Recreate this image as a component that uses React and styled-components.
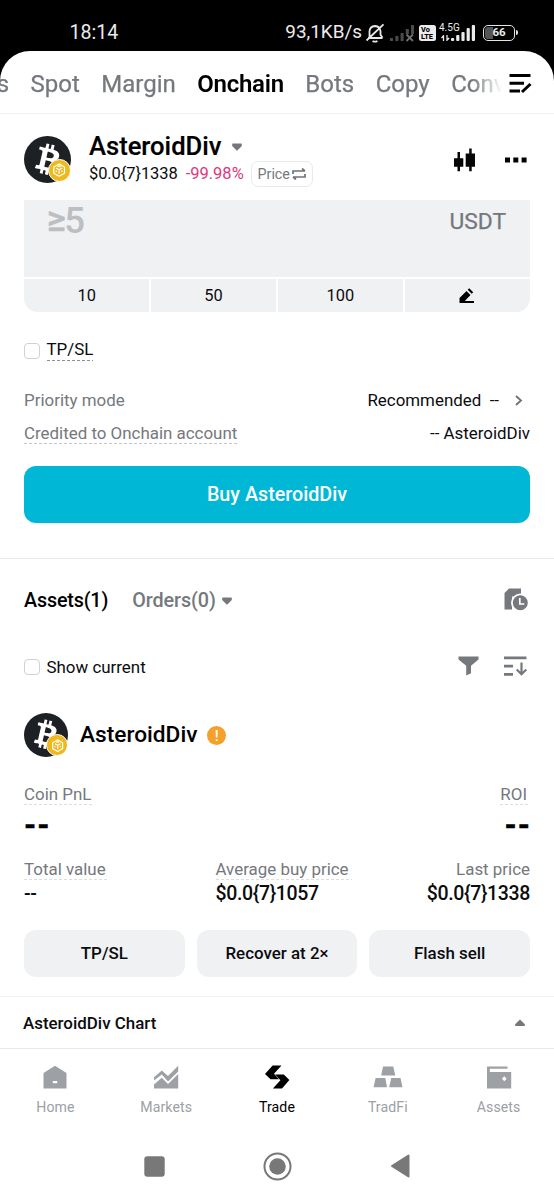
import React from "react";
import styled, { createGlobalStyle } from "styled-components";
import { FaBtc } from "react-icons/fa";

const Global = createGlobalStyle`
  * { box-sizing: border-box; }
  body { margin: 0; background: #fff; }
  button { font: inherit; border: 0; padding: 0; margin: 0; color: inherit; background: none; }
  svg { display: block; flex: none; }
`;

const GREY = "#75787d";
const INK = "#0b0c0e";

const Screen = styled.div`
  width: 554px;
  height: 1200px;
  overflow: hidden;
  display: flex;
  flex-direction: column;
  background: #000;
  color: ${INK};
  font-family: Roboto, "Liberation Sans", sans-serif;
  font-size: 16.92px;
  line-height: 1;
  white-space: nowrap;
`;

/* ---------- status bar ---------- */
const StatusBar = styled.header`
  height: 51px;
  flex: none;
  display: flex;
  align-items: center;
  padding: 14px 36px 0 69.5px;
  color: #ececec;
  font-size: 18.9px;
`;
const Clock = styled.span`
  flex: 1;
  font-size: 19.6px;
`;
const StatusIcons = styled.div`
  display: flex;
  align-items: center;
`;
const BellOff = styled.svg`
  margin-left: 3px;
`;
const NoSignal = styled.svg`
  margin-left: 5px;
`;
const VoLte = styled.div`
  width: 17px;
  height: 16px;
  margin: 0 3px 0 4px;
  border-radius: 2.5px;
  background: #ececec;
  color: #000;
  font-size: 7.4px;
  font-weight: 800;
  line-height: 7px;
  padding: 1px 0 0 2px;
`;
const Network = styled.div`
  display: flex;
  align-items: flex-end;
  height: 19px;
`;
const NetworkLabel = styled.div`
  display: flex;
  flex-direction: column;
  justify-content: space-between;
  height: 18px;
  width: 12px;
  margin-bottom: 1px;
  font-size: 10px;
  line-height: 9px;
  svg { margin-left: 2px; }
`;
const Battery = styled.div`
  width: 32px;
  height: 16px;
  margin-left: 7px;
  border: 1.6px solid #e4e4e4;
  border-radius: 5px;
  font-size: 11.5px;
  font-weight: 700;
  display: flex;
  align-items: center;
  justify-content: center;
  background: linear-gradient(90deg, #555 0 9px, #000 9px);
  background-clip: content-box;
  padding: 1px;
`;
const BatteryNub = styled.div`
  width: 2px;
  height: 5px;
  margin-left: 1px;
  background: #e4e4e4;
  border-radius: 0 2px 2px 0;
`;

/* ---------- sheet and tabs ---------- */
const Sheet = styled.div`
  flex: 1;
  display: flex;
  flex-direction: column;
  background: #fff;
  border-radius: 30px 30px 0 0;
`;
const TabBar = styled.nav`
  height: 63px;
  display: flex;
  align-items: center;
  padding: 3px 22px 0 0;
  border-bottom: 1px solid #efeff1;
  font-size: 24px;
`;
const TabList = styled.div`
  flex: 1;
  min-width: 0;
  display: flex;
  gap: 21.5px;
  margin-left: -3.3px;
  overflow: hidden;
  line-height: 32px;
  mask-image: linear-gradient(90deg, #000 475px, transparent 505px);
`;
const Tab = styled.span`
  flex: none;
  color: ${(p) => (p.$active ? "#000" : GREY)};
  font-weight: ${(p) => (p.$active ? 600 : 400)};
  letter-spacing: ${(p) => (p.$active ? "-0.28px" : "0")};
  -webkit-text-stroke: ${(p) => (p.$active ? "0" : "0.25px")};
`;

/* ---------- token header ---------- */
const TokenHeader = styled.section`
  height: 86px;
  display: flex;
  align-items: center;
  padding: 5px 27px 0 24px;
`;
const Logo = styled.div`
  position: relative;
  flex: none;
  width: ${(p) => p.$size}px;
  height: ${(p) => p.$size}px;
  border-radius: 50%;
  background: #1d2025;
  color: #fff;
  display: flex;
  align-items: center;
  justify-content: center;
  > svg { transform: translateX(1px) rotate(13deg); }
`;
const LogoBadge = styled.div`
  position: absolute;
  right: 0;
  bottom: 1px;
  width: 49%;
  height: 49%;
  border-radius: 50%;
  background: #efb81c;
  border: 1.3px solid #fff;
  display: flex;
  align-items: center;
  justify-content: center;
`;
const TokenInfo = styled.div`
  flex: 1;
  margin-left: 18px;
`;
const TokenName = styled.h1`
  margin: 0;
  height: 29px;
  display: flex;
  align-items: center;
  gap: 10px;
  font-size: 25.6px;
  font-weight: 500;
  color: #000;
  -webkit-text-stroke: 0.2px;
`;
const PriceLine = styled.div`
  display: flex;
  align-items: center;
  height: 26px;
  font-size: 16.5px;
`;
const Price = styled.span`
  letter-spacing: -0.1px;
`;
const Change = styled.span`
  margin-left: 8px;
  color: #e0377c;
`;
const PriceChip = styled.button`
  height: 26px;
  width: 62px;
  margin-left: 7px;
  border: 1.5px solid #e9e9eb;
  border-radius: 7px;
  display: flex;
  align-items: center;
  justify-content: center;
  gap: 2px;
  font-size: 14.3px;
  color: ${GREY};
`;
const HeaderIcons = styled.div`
  display: flex;
  align-items: center;
  gap: 30.5px;
`;

/* ---------- order form ---------- */
const Form = styled.section`
  padding: 0 24px;
  height: 359px;
  border-bottom: 1px solid #e8e9eb;
`;
const AmountBox = styled.div`
  height: 77px;
  display: flex;
  justify-content: space-between;
  padding: 0 24px 0 23px;
  background: #f0f1f3;
`;
const AmountHint = styled.div`
  display: flex;
  color: #bcbec1;
  font-size: 36.5px;
  line-height: 41px;
  font-weight: 500;
  span { font-size: 36px; line-height: 38px; margin-right: -1.5px; -webkit-text-stroke: 0.6px; }
`;
const Currency = styled.div`
  color: ${GREY};
  font-size: 22.8px;
  line-height: 44px;
  -webkit-text-stroke: 0.25px;
`;
const Presets = styled.div`
  margin-top: 2px;
  height: 33px;
  display: grid;
  grid-template-columns: repeat(4, 1fr);
  gap: 1.5px;
  border-radius: 0 0 14px 14px;
  overflow: hidden;
`;
const Preset = styled.button`
  background: #f0f1f3;
  display: flex;
  align-items: center;
  justify-content: center;
  padding-top: 1px;
  font-size: 16.4px;
`;
const CheckRow = styled.label`
  display: flex;
  align-items: center;
  gap: 6.5px;
`;
const Checkbox = styled.span`
  width: 16px;
  height: 16px;
  border: 1.4px solid #cfd0d3;
  border-radius: 4px;
`;
const Hint = styled.span`
  display: inline-block;
  height: ${(p) => p.$h || 22}px;
  line-height: ${(p) => p.$lh || 22}px;
  padding-right: ${(p) => p.$extra || 0}px;
  background: repeating-linear-gradient(90deg, ${(p) => p.$line || "#dcdddf"} 0 3px, transparent 3px 5px) bottom left / 100% 1px no-repeat;
`;
const TpSlRow = styled(CheckRow)`
  height: 21px;
  margin-top: 28px;
`;
const Row = styled.div`
  display: flex;
  align-items: center;
  justify-content: space-between;
  height: 33px;
`;
const Rows = styled.div`
  margin-top: 23px;
`;
const Label = styled.span`
  color: ${GREY};
`;
const Value = styled.span`
  display: flex;
  align-items: center;
`;
const Chevron = styled.svg`
  margin: 0 7px 0 16px;
`;
const BuyButton = styled.button`
  display: block;
  width: 100%;
  height: 56.5px;
  margin-top: 16px;
  padding-top: 1.5px;
  border-radius: 12px;
  background: #00b8d6;
  color: #fff;
  font-size: 19.74px;
  font-weight: 500;
`;

/* ---------- assets ---------- */
const Assets = styled.section`
  padding: 0 24px;
  height: 437px;
`;
const AssetTabs = styled.div`
  display: flex;
  align-items: center;
  height: 40px;
  padding-top: 2px;
  margin-top: 21px;
  font-size: 19.74px;
  font-weight: 500;
`;
const AssetTab = styled.span`
  display: flex;
  align-items: center;
  gap: 6px;
  margin-right: 24px;
  letter-spacing: ${(p) => (p.$active ? "-0.17px" : "-0.05px")};
  color: ${(p) => (p.$active ? "#000" : GREY)};
`;
const Spacer = styled.div`
  flex: 1;
`;
const HistoryIcon = styled.svg`
  margin: -3px 2.5px 0 0;
`;
const FilterRow = styled.div`
  display: flex;
  align-items: center;
  height: 30px;
  margin-top: 32px;
`;
const FilterIcons = styled.div`
  display: flex;
  gap: 25px;
  margin: -2px 3px 0 auto;
`;
const AssetHead = styled.div`
  display: flex;
  align-items: center;
  height: 44px;
  margin-top: 31px;
  color: #000;
  font-size: 22.7px;
  font-weight: 500;
`;
const AssetName = styled.span`
  margin: 0 9.5px 0 12px;
`;
const Warning = styled.span`
  width: 19.5px;
  height: 19.5px;
  margin-top: 1px;
  border-radius: 50%;
  background: #f5a028;
  color: #fff;
  font-size: 15px;
  line-height: 20px;
  text-align: center;
`;
const StatRow = styled.div`
  display: grid;
  grid-template-columns: ${(p) => p.$columns};
  margin-top: ${(p) => p.$top}px;
`;
const Stat = styled.div`
  display: flex;
  flex-direction: column;
  align-items: ${(p) => (p.$end ? "flex-end" : "flex-start")};
`;
const BigValue = styled.div`
  height: 41px;
  line-height: 40px;
  margin-right: -1px;
  font-size: 29px;
  font-weight: 800;
  letter-spacing: 1px;
  color: #000;
  -webkit-text-stroke: 0.6px;
`;
const SmallValue = styled.div`
  height: 25px;
  line-height: 27px;
  font-size: 19.5px;
  font-weight: 500;
  letter-spacing: -0.35px;
`;
const Actions = styled.div`
  display: grid;
  grid-template-columns: repeat(3, 1fr);
  gap: 12px;
  margin-top: 25px;
`;
const Action = styled.button`
  height: 47px;
  border-radius: 12px;
  background: #f0f1f3;
  font-weight: 500;
`;

/* ---------- bottom ---------- */
const ChartBar = styled.section`
  height: 53px;
  display: flex;
  align-items: center;
  justify-content: space-between;
  padding: 1px 29px 0 23px;
  border-top: 1px solid #f0f0f2;
  border-bottom: 1px solid #e9e9eb;
  font-weight: 500;
`;
const BottomNav = styled.nav`
  height: 83px;
  display: grid;
  grid-template-columns: repeat(5, 1fr);
`;
const NavItem = styled.div`
  display: flex;
  flex-direction: column;
  align-items: center;
  padding-top: 15px;
  gap: 10px;
  color: ${(p) => (p.$active ? "#000" : "#9da0a4")};
  font-size: 14.1px;
  letter-spacing: 0.1px;
`;
const SystemNav = styled.div`
  display: flex;
  align-items: center;
  justify-content: center;
  height: 68px;
  padding-right: 1px;
  gap: 98px;
`;

const Down = () => (
  <svg width="10" height="8" viewBox="0 0 10 8">
    <path d="M.8.5h8.4q.6 0 .6.6V3L5.600 7.300q-.6.5-1.200 0L.2 3V1.100Q.2.5.8.5Z" fill="#74777b" />
  </svg>
);
const Bars = ({ color, heights }) => (
  <svg width="25" height="18" viewBox="0 0 25 18" fill={color}>
    {heights.map((h, i) => (
      <rect key={i} x={i * 5.2} y={17 - h} width="3.2" height={h} rx="1" />
    ))}
  </svg>
);

function TokenLogo({ size }) {
  return (
    <Logo $size={size}>
      <FaBtc size={size * 0.66} />
      <LogoBadge>
        <svg width="68%" height="68%" viewBox="0 0 16 16" fill="none" stroke="#fff" strokeWidth="1.4">
          <path d="M8 1l6 3.500v7L8 15l-6-3.500v-7Z" />
          <path d="M4.600 5.600 8 7.600l3.400-2M8 7.500v4.500M4.800 8.300v1.700M11.200 8.300v1.700M6.200 4.100 8 3.300l1.800.8" />
        </svg>
      </LogoBadge>
    </Logo>
  );
}

const navItems = [
  ["Home", <path key="h" d="M12 .7 23.500 8v15.600H.5V8ZM9.800 16v2.200h4.400V16Z" fillRule="evenodd" />],
  [
    "Markets",
    <g key="m">
      <path d="m0 12.200 7.800-6.600L14 11 24.200.8v5.600L14 16.500 7.800 9.600 0 15.600Z" />
      <path d="m0 19.500 7.800-6.800 6.200 6.300L24.200 9v14.600H0Z" />
    </g>,
  ],
  [
    "Trade",
    <g key="t">
      <path d="M7.600.5H16.500L9 8.800 14 14.200H5.500L0 8.900Z" />
      <path d="M17 23.600H7.900L15.400 15.200 10.200 9.500H18.800L24.400 15Z" />
    </g>,
  ],
  ["TradFi", <path key="f" d="M7 1.500h10.300l2 9H5.200ZM-.4 13H9.300l1.700 9.200H-2.400ZM15.200 13H24.500l2 9.200H13.200Z" />],
  [
    "Assets",
    <path key="a" d="M0 1.500h20.500v2.200H2.800v3.200h21.400v16.700H0ZM17.300 11.200 15 13.700l2.300 2.500 2.300-2.500Z" fillRule="evenodd" />,
  ],
];

export default function App() {
  return (
    <Screen>
      <Global />
      <StatusBar>
        <Clock>18:14</Clock>
        <StatusIcons>
          <span>93,1KB/s</span>
          <BellOff width="20" height="20" viewBox="0 0 20 20" fill="none" stroke="#e8e8e8" strokeWidth="1.8">
            <path d="M3 15h14.500M4.500 14.500V8.300Q4.800 3.400 10 3q5.200.4 5.500 5.300v3.400l2 3.100M18.500 1.300 1.500 17.500M7.600 17.900q2.400 1.600 4.800 0" />
          </BellOff>
          <NoSignal width="25" height="18" viewBox="0 0 25 18" fill="#4b4b4b">
            <path d="M0 14h3v3H0zM5.400 12h3v5h-3zM10.600 9h3v8h-3zM15.800 5h3v5h-3zM21 1h3v9h-3z" />
            <path d="m16.500 10.500 6.500 6.500M23 10.500l-6.500 6.500" stroke="#707070" strokeWidth="1.8" />
          </NoSignal>
          <VoLte>Vo<br />LTE</VoLte>
          <Network>
            <NetworkLabel>
              4.5G
              <svg width="9" height="6" viewBox="0 0 9 6" stroke="#e8e8e8" strokeWidth="1.3" fill="none">
                <path d="M2.500 6V.8L.5 3M6 0v5.200L8.200 3" />
              </svg>
            </NetworkLabel>
            <Bars color="#ececec" heights={[3, 6, 9, 13, 16]} />
          </Network>
          <Battery>66</Battery>
          <BatteryNub />
        </StatusIcons>
      </StatusBar>

      <Sheet>
        <TabBar>
          <TabList>
            <Tab>s</Tab>
            <Tab>Spot</Tab>
            <Tab>Margin</Tab>
            <Tab $active>Onchain</Tab>
            <Tab>Bots</Tab>
            <Tab>Copy</Tab>
            <Tab>Conv</Tab>
          </TabList>
          <svg width="23" height="20" viewBox="0 0 23 20" stroke="#000" strokeWidth="3" fill="none">
            <path d="M.5 1.500h21M.5 9.300H15M.5 17.100H11M13 18l8.500-8" />
          </svg>
        </TabBar>

        <TokenHeader>
          <TokenLogo size={47} />
          <TokenInfo>
            <TokenName>AsteroidDiv <Down /></TokenName>
            <PriceLine>
              <Price>$0.0{"{7}"}1338</Price>
              <Change>-99.98%</Change>
              <PriceChip>
                Price
                <svg width="14" height="12" viewBox="0 0 14 12" fill="none" stroke="#6f7276" strokeWidth="1.700">
                  <path d="M1 6V3h12M10 .5 13 3M13 6v3H1M4 11.500 1 9" />
                </svg>
              </PriceChip>
            </PriceLine>
          </TokenInfo>
          <HeaderIcons>
            <svg width="21" height="24" viewBox="0 0 21 24" fill="#050607">
              <path d="M0 10.200h3.500V4H6v6.200h3.300v8.600H6v4.500H3.500v-4.500H0ZM11.700 5.400h3.500V.5h2.500v4.900H21v13.400h-3.300v4.500h-2.500v-4.500h-3.500Z" />
            </svg>
            <svg width="22" height="6" viewBox="0 0 22 6">
              <path d="M0 .5h5v5H0zM8.300.5h5v5h-5zM16.600.5h5v5h-5z" />
            </svg>
          </HeaderIcons>
        </TokenHeader>

        <Form>
          <AmountBox>
            <AmountHint><span>≥</span>5</AmountHint>
            <Currency>USDT</Currency>
          </AmountBox>
          <Presets>
            <Preset>10</Preset>
            <Preset>50</Preset>
            <Preset>100</Preset>
            <Preset>
              <svg width="16" height="16" viewBox="0 0 16 16">
                <path d="M.5 10 7.500 3 11.500 7 5.800 13H15v2H.5ZM8.700 1.800 10.200.3 14.200 4.300 12.700 5.800Z" />
              </svg>
            </Preset>
          </Presets>
          <TpSlRow>
            <Checkbox />
            <Hint $h={21} $lh={19} $line="#8d9094">TP/SL</Hint>
          </TpSlRow>
          <Rows>
            <Row>
              <Label>Priority mode</Label>
              <Value>
                Recommended&nbsp; --
                <Chevron width="8" height="11" viewBox="0 0 8 11" fill="none" stroke="#6d7074" strokeWidth="1.800">
                  <path d="m1 1 5 4.500-5 4.500" />
                </Chevron>
              </Value>
            </Row>
            <Row>
              <Label><Hint $h={21} $lh={21} $line="#c4c6c9">Credited to Onchain account</Hint></Label>
              <Value>-- AsteroidDiv</Value>
            </Row>
          </Rows>
          <BuyButton>Buy AsteroidDiv</BuyButton>
        </Form>

        <Assets>
          <AssetTabs>
            <AssetTab $active>Assets(1)</AssetTab>
            <AssetTab>Orders(0) <Down /></AssetTab>
            <Spacer />
            <HistoryIcon width="24" height="23" viewBox="0 0 24 23">
              <path d="M5 .5h12v8H8v13H.5V5Z" fill={GREY} />
              <circle cx="16.300" cy="14.800" r="9.300" fill="#fff" />
              <circle cx="16.300" cy="14.800" r="7.500" fill={GREY} />
              <path d="M15.800 10v6h4.500" stroke="#fff" strokeWidth="1.700" fill="none" />
            </HistoryIcon>
          </AssetTabs>
          <FilterRow>
            <CheckRow><Checkbox />Show current</CheckRow>
            <FilterIcons>
              <svg width="21" height="20" viewBox="0 0 21 20" fill={GREY}>
                <path d="M.5.500h20v3L13 9.800v7.500l-4.800 2.200V9.800L.5 3.500Z" />
              </svg>
              <svg width="23" height="20" viewBox="0 0 23 20" fill="none" stroke={GREY} strokeWidth="2.700">
                <path d="M0 1.800h22.500M0 10.200h9M0 18.300h9" />
                <path d="M17.500 6.500v11.500M12.700 13.500l4.800 4.700 4.800-4.700" strokeWidth="2.200" />
              </svg>
            </FilterIcons>
          </FilterRow>
          <AssetHead>
            <TokenLogo size={44} />
            <AssetName>AsteroidDiv</AssetName>
            <Warning>!</Warning>
          </AssetHead>
          <StatRow $top={26} $columns="1fr 1fr">
            <Stat><Label><Hint $extra={3}>Coin PnL</Hint></Label><BigValue>--</BigValue></Stat>
            <Stat $end><Label><Hint $extra={3}>ROI</Hint></Label><BigValue>--</BigValue></Stat>
          </StatRow>
          <StatRow $top={12} $columns="191.5px 1fr 1fr">
            <Stat><Label><Hint $extra={3}>Total value</Hint></Label><SmallValue>--</SmallValue></Stat>
            <Stat><Label><Hint $extra={3}>Average buy price</Hint></Label><SmallValue>$0.0{"{7}"}1057</SmallValue></Stat>
            <Stat $end><Label><Hint $line="transparent">Last price</Hint></Label><SmallValue>$0.0{"{7}"}1338</SmallValue></Stat>
          </StatRow>
          <Actions>
            <Action>TP/SL</Action>
            <Action>Recover at 2×</Action>
            <Action>Flash sell</Action>
          </Actions>
        </Assets>

        <ChartBar>
          AsteroidDiv Chart
          <svg width="10" height="8" viewBox="0 0 10 8">
            <path d="M5 .5 9.800 5.200V7H.2V5.200Z" fill="#74777b" />
          </svg>
        </ChartBar>

        <BottomNav>
          {navItems.map(([label, icon]) => (
            <NavItem key={label} $active={label === "Trade"}>
              <svg width="30" height="26" viewBox="-3 -1 30 26" fill="currentColor">{icon}</svg>
              {label}
            </NavItem>
          ))}
        </BottomNav>

        <SystemNav>
          <svg width="21" height="21" viewBox="0 0 21 21"><rect x=".3" y=".3" width="20.400" height="20.400" rx="3" fill="#787878" /></svg>
          <svg width="29" height="29" viewBox="0 0 29 29">
            <circle cx="14.500" cy="14.500" r="13" fill="none" stroke="#787878" strokeWidth="2" />
            <circle cx="14.500" cy="14.500" r="8.300" fill="#787878" />
          </svg>
          <svg width="20" height="24" viewBox="0 0 20 24"><path d="M18.500 1.500v21L2 12Z" fill="#787878" stroke="#787878" strokeWidth="2" strokeLinejoin="round" /></svg>
        </SystemNav>
      </Sheet>
    </Screen>
  );
}
